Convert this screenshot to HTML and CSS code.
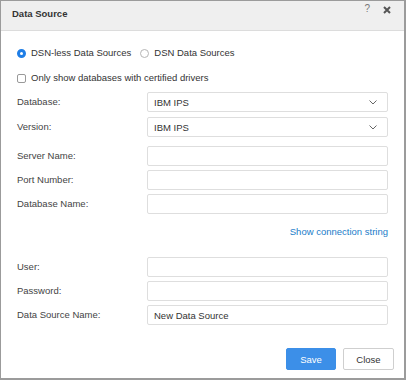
FILE: index.html
```html
<!DOCTYPE html>
<html lang="en">
<head>
    <meta charset="UTF-8">
    <meta name="viewport" content="width=device-width, initial-scale=1.0">
    <title>Data Source</title>
    <link rel="stylesheet" href="styles.css">
</head>
<body>
    <div class="dialog">
        <div class="titlebar">
            <span class="title">Data Source</span>
            <div class="tools">
                <span class="help">?</span>
                <svg class="close-x" width="8" height="8" viewBox="0 0 8 8">
                    <path d="M1 1 L7 7 M7 1 L1 7" stroke="#555" stroke-width="2" fill="none"/>
                </svg>
            </div>
        </div>

        <div class="content">
            <div class="radios">
                <label class="radio"><span class="dot checked"></span>DSN-less Data Sources</label>
                <label class="radio"><span class="dot"></span>DSN Data Sources</label>
            </div>

            <label class="check"><span class="box"></span>Only show databases with certified drivers</label>

            <div class="form-grid first">
                <label>Database:</label>
                <div class="select">IBM IPS
                    <svg width="8" height="5" viewBox="0 0 8 5"><path d="M0.5 0.5 L4 4 L7.5 0.5" stroke="#666" stroke-width="1" fill="none"/></svg>
                </div>
                <label>Version:</label>
                <div class="select">IBM IPS
                    <svg width="8" height="5" viewBox="0 0 8 5"><path d="M0.5 0.5 L4 4 L7.5 0.5" stroke="#666" stroke-width="1" fill="none"/></svg>
                </div>
            </div>

            <div class="form-grid second">
                <label for="server">Server Name:</label>
                <input type="text" id="server">
                <label for="port">Port Number:</label>
                <input type="text" id="port">
                <label for="dbname">Database Name:</label>
                <input type="text" id="dbname">
            </div>

            <div class="link-row"><a href="#">Show connection string</a></div>

            <div class="form-grid third">
                <label for="user">User:</label>
                <input type="text" id="user">
                <label for="password">Password:</label>
                <input type="password" id="password">
                <label for="dsn">Data Source Name:</label>
                <input type="text" id="dsn" value="New Data Source">
            </div>
        </div>

        <div class="footer">
            <button class="btn primary">Save</button>
            <button class="btn">Close</button>
        </div>
    </div>
</body>
</html>
```

FILE: styles.css
```css
/* dialog layout */
body {
    margin: 0;
    font-family: 'Liberation Sans', Arial, sans-serif;
    font-size: 9.5px;
    color: #333;
    background: #fff;
}

.dialog {
    width: 406px;
    height: 380px;
    box-sizing: border-box;
    border: 1px solid #9b9b9b;
    border-right-width: 2px;
    border-bottom-width: 2px;
    display: flex;
    flex-direction: column;
}

.titlebar {
    height: 29px;
    background-color: #efefef;
    border-bottom: 1px solid #dcdcdc;
    display: flex;
    justify-content: space-between;
    padding: 0 13px 0 11px;
}

.title {
    font-weight: bold;
    font-size: 9.5px;
    line-height: 14px;
    padding-top: 6px;
    color: #333;
}

.tools {
    display: flex;
    gap: 13px;
    align-items: flex-start;
    padding-top: 2px;
}

.help {
    color: #777;
    font-size: 10px;
    line-height: 12px;
}

.close-x {
    margin-top: 3px;
}

.content {
    padding: 15px 16px 0 16px;
}

.radios {
    display: flex;
    gap: 9px;
    line-height: 14px;
}

.radio, .check {
    display: flex;
    align-items: center;
    gap: 5px;
    line-height: 14px;
    color: #333;
}

.dot {
    width: 9px;
    height: 9px;
    border: 1px solid #b5b5b5;
    border-radius: 50%;
    box-sizing: border-box;
    background: #fff;
}

.dot.checked {
    border: 3px solid #1f7ee6;
}

.check {
    margin-top: 11px;
}

.box {
    width: 9px;
    height: 9px;
    border: 1px solid #999;
    border-radius: 2px;
    box-sizing: border-box;
}

.form-grid {
    display: grid;
    grid-template-columns: 130px 1fr;
    row-gap: 4px;
    align-items: center;
}

.form-grid label {
    color: #444;
    line-height: 14px;
}

.form-grid.first {
    margin-top: 7px;
    row-gap: 5px;
}

.form-grid.second {
    margin-top: 9px;
}

.form-grid.third {
    margin-top: 18px;
}

.select, .form-grid input {
    height: 20px;
    box-sizing: border-box;
    border: 1px solid #dedede;
    border-radius: 2px;
    font-family: inherit;
    font-size: 9.5px;
    color: #333;
    padding: 0 6px;
    margin: 0;
    background: #fff;
}

.select {
    display: flex;
    align-items: center;
    justify-content: space-between;
    padding-right: 10px;
}

.link-row {
    text-align: right;
    margin-top: 11px;
    line-height: 14px;
}

.link-row a {
    color: #1a7cc9;
    text-decoration: none;
}

.footer {
    display: flex;
    justify-content: flex-end;
    gap: 7px;
    padding: 0 10px 0 0;
    margin-top: 23px;
}

.btn {
    height: 22px;
    width: 51px;
    border: 1px solid #cfcfcf;
    border-radius: 2px;
    background: #fff;
    color: #333;
    font-family: inherit;
    font-size: 9.5px;
    padding: 0;
}

.btn.primary {
    width: 50px;
    background-color: #3c8fe8;
    border-color: #3c8fe8;
    color: #fff;
}
```
